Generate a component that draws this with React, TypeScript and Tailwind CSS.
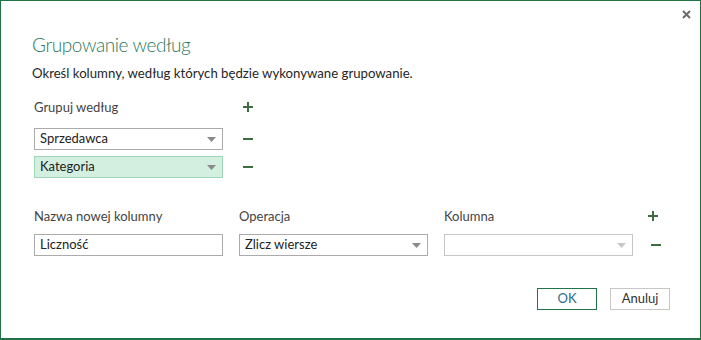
import React from "react";

const font = { fontFamily: 'Lato, "Noto Sans", sans-serif' };

function Caret({ light }: { light?: boolean }) {
    return (
        <svg width="9" height="5" viewBox="0 0 9 5" className="shrink-0">
            <path d="M0 0h9L4.5 5z" fill={light ? "#c8c8c8" : "#8a8a8a"} />
        </svg>
    );
}

function Plus() {
    return (
        <svg width="10" height="10" viewBox="0 0 10 10">
            <path d="M4 0h2v4h4v2H6v4H4V6H0V4h4z" fill="#3d6e40" />
        </svg>
    );
}

function Minus() {
    return (
        <svg width="10" height="2" viewBox="0 0 10 2">
            <rect width="10" height="2" fill="#3d6e40" />
        </svg>
    );
}

function Select({ value, active, disabled }: { value?: string; active?: boolean; disabled?: boolean }) {
    return (
        <div
            className={`flex h-[22px] w-[189px] items-center justify-between border pl-[5px] pr-[6px] text-[13px] text-[#222] ${
                active
                    ? "border-[#9fd6b8] bg-[#d3efe0]"
                    : disabled
                    ? "border-[#c6c6c6] bg-white"
                    : "border-[#ababab] bg-white"
            }`}
        >
            <span>{value}</span>
            <Caret light={disabled} />
        </div>
    );
}

export default function App() {
    return (
        <div
            className="relative h-[340px] w-[701px] border border-b-2 border-[#217346] bg-white text-[#333]"
            style={font}
        >
            <button className="absolute right-[9px] top-[9px] text-[#6b6b6b]">
                <svg width="9" height="9" viewBox="0 0 9 9">
                    <path d="M1 1l7 7M8 1L1 8" stroke="#6b6b6b" strokeWidth="2" />
                </svg>
            </button>

            <div className="pl-[31px] pt-[30px]">
                <h1 className="text-[19px] font-light leading-[28px] tracking-[-0.4px] text-[#2b7a5e]">
                    Grupowanie według
                </h1>
                <p className="mt-[4px] text-[13.2px] leading-[20px] text-[#262626]">
                    Określ kolumny, według których będzie wykonywane grupowanie.
                </p>

                <div className="mt-[15px] flex w-[221px] items-center justify-between pl-[2px]">
                    <span className="text-[13px] leading-[18px] text-[#444]">Grupuj według</span>
                    <Plus />
                </div>

                <div className="mt-[12px] flex flex-col gap-[6px] pl-[2px]">
                    <div className="flex items-center gap-[20px]">
                        <Select value="Sprzedawca" />
                        <Minus />
                    </div>
                    <div className="flex items-center gap-[20px]">
                        <Select value="Kategoria" active />
                        <Minus />
                    </div>
                </div>

                <div className="mt-[29px] flex items-center pl-[2px] text-[13px] leading-[18px] text-[#444]">
                    <span className="w-[205px]">Nazwa nowej kolumny</span>
                    <span className="w-[205px]">Operacja</span>
                    <span className="w-[204px]">Kolumna</span>
                    <Plus />
                </div>

                <div className="mt-[9px] flex items-center pl-[2px]">
                    <div className="flex h-[22px] w-[189px] items-center border border-[#ababab] pl-[5px] text-[13px] text-[#222]">
                        Liczność
                    </div>
                    <div className="ml-[16px]">
                        <Select value="Zlicz wiersze" />
                    </div>
                    <div className="ml-[16px]">
                        <Select disabled />
                    </div>
                    <div className="ml-[18px]">
                        <Minus />
                    </div>
                </div>

                <div className="mt-[32px] flex justify-end gap-[13px] pr-[30px]">
                    <button className="h-[22px] w-[60px] border border-[#217346] text-[13px] text-[#2b6e8a]">OK</button>
                    <button className="h-[22px] w-[60px] border border-[#c6c6c6] text-[13px] text-[#333]">Anuluj</button>
                </div>
            </div>
        </div>
    );
}
